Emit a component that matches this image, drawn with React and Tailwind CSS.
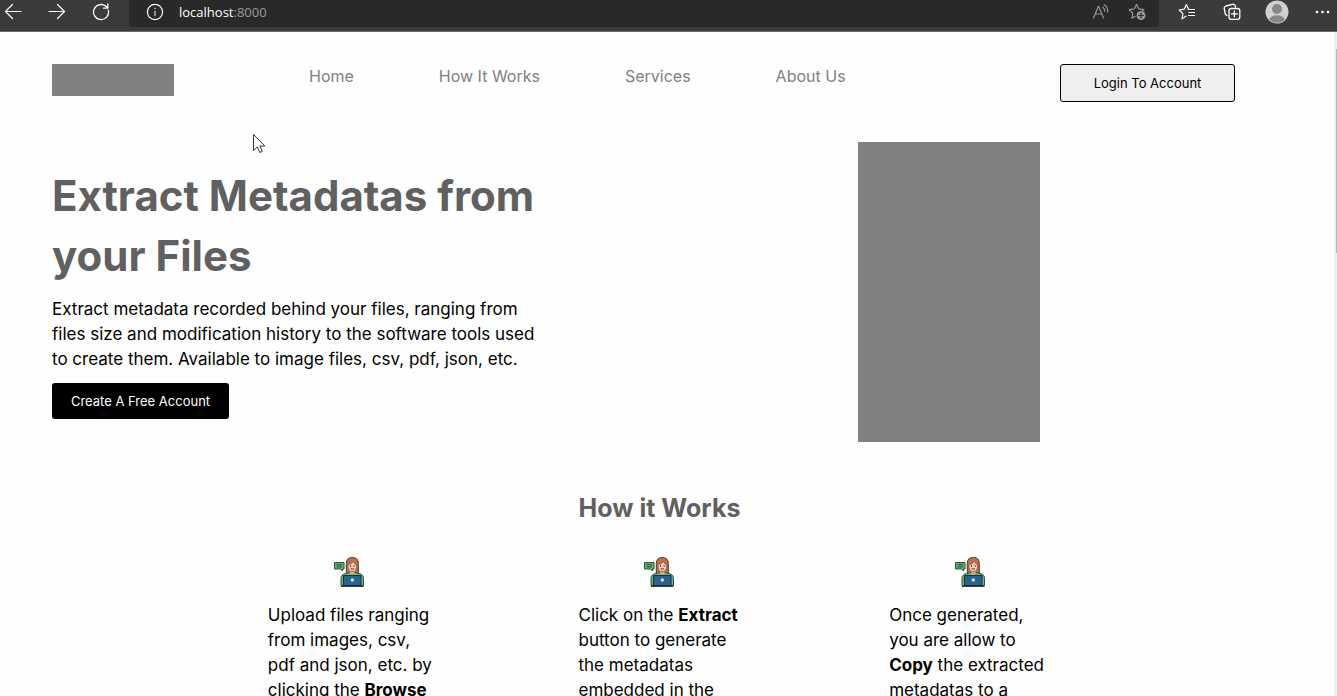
import React from "react";

const stroke = { fill: "none", stroke: "currentColor", strokeLinecap: "round", strokeLinejoin: "round" };

function ToolButton({ label, className = "", children }) {
  return (
    <button type="button" aria-label={label} className={`flex h-6 w-6 shrink-0 items-center justify-center ${className}`}>
      {children}
    </button>
  );
}

function ArrowLeft() {
  return (
    <svg width="18" height="18" viewBox="0 0 18 18" {...stroke} strokeWidth="1.2">
      <path d="M17 8.500H1.500M8.500 1.500l-7 7 7 7" />
    </svg>
  );
}

function ArrowRight() {
  return (
    <svg width="18" height="18" viewBox="0 0 18 18" {...stroke} strokeWidth="1.2">
      <path d="M1 8.500h15.500M9.500 1.500l7 7-7 7" />
    </svg>
  );
}

function Reload() {
  return (
    <svg width="18" height="18" viewBox="0 0 18 18" {...stroke} strokeWidth="1.3">
      <path d="M16.300 7.200A7.500 7.500 0 1 1 13.600 3.100L15.800 5M15.800 1v4.200h-4.200" />
    </svg>
  );
}

function Info() {
  return (
    <svg width="18" height="18" viewBox="0 0 18 18" {...stroke} strokeWidth="1.2">
      <circle cx="9" cy="9" r="7.600" />
      <path d="M9 8.200v4.300" stroke="#aaa" strokeWidth="1.600" />
      <circle cx="9" cy="5.400" r=".6" fill="#aaa" stroke="#aaa" strokeWidth=".6" />
    </svg>
  );
}

function ReadAloud() {
  return (
    <svg width="18" height="18" viewBox="0 0 18 18" {...stroke} strokeWidth="1.200">
      <path d="M1.500 15L6.500 3l5 12M3.300 11h6.400M10.800 4.200q2 1.600 1.800 4M12.300 1.800q3.800 2.700 3.200 7" />
    </svg>
  );
}

function StarPlus() {
  return (
    <svg width="18" height="18" viewBox="0 0 18 18" {...stroke} strokeWidth="1.200">
      <path d="M7.200 13.300L4 15.200l.8-5L1.200 6.700l5-.8L8.500 1.300l2.300 4.600 5 .8-1.300 1.300" />
      <circle cx="13" cy="12.500" r="4.500" fill="currentColor" stroke="none" />
      <path d="M13 10.200v4.600M10.700 12.500h4.600" stroke="#292929" />
    </svg>
  );
}

function Favorites() {
  return (
    <svg width="18" height="18" viewBox="0 0 18 18" {...stroke} strokeWidth="1.200">
      <path d="M8 13.200L4 15.800l.9-5.100L1.200 7l5-.8L8.400 1.600l2.200 4.900H16.500M11 9.500h5.500M10.500 12.500h6" />
    </svg>
  );
}

function Collections() {
  return (
    <svg width="18" height="18" viewBox="0 0 18 18" {...stroke} strokeWidth="1.300">
      <path d="M4 12.500Q2.500 12 2.200 10.500L1.200 5.500Q1 3.600 2.800 3l6.700-1.700q1.900-.3 2.600 1.300l.4 1.400" />
      <rect x="6" y="5.500" width="10.800" height="10.800" rx="2.200" />
      <path d="M11.400 8v5.800M8.500 10.900h5.800" />
    </svg>
  );
}

function Avatar() {
  return (
    <svg width="24" height="24" viewBox="0 0 24 24">
      <defs>
        <clipPath id="avatar-edge"><circle cx="12" cy="12" r="10.800" /></clipPath>
      </defs>
      <circle cx="12" cy="12" r="11.500" fill="#d2d0ce" />
      <circle cx="12" cy="9" r="5" fill="#8a8886" />
      <ellipse cx="12" cy="20" rx="7.800" ry="4.700" fill="#8a8886" clipPath="url(#avatar-edge)" />
    </svg>
  );
}

function Worker() {
  return (
    <svg width="32" height="32" viewBox="0 0 32 32" className="block">
      <path d="M1.500 6.500h9.500v6.500H9.500v2l-2-2h-6z" fill="#62b276" stroke="#2d5038" strokeLinejoin="round" />
      <path d="M3.500 8.700h5.500M3.500 10.800h5.500" stroke="#254c34" />
      <path d="M13.300 18V7.500q0-6 6-6t6 6V18z" fill="#b9704d" stroke="#54362a" />
      <path d="M8 29.500v-7q0-4 4.500-5l4-1h5.500l4 1q4.500 1 4.500 5v7z" fill="#69b77a" stroke="#2c4e39" />
      <path d="M16.800 13h5v4l-2.500 2.200-2.500-2.200z" fill="#dca184" />
      <path d="M15 8.500q3.700-.3 5.500-3 .8 2.500 3 3v2.700q-.4 4.300-4.200 4.300T15 11.200z" fill="#f6cdb2" stroke="#7e5140" strokeWidth=".7" />
      <path d="M17.500 9.500v.8M21.200 9.500v.8M18 12.800q1.300 1 2.600 0" stroke="#403035" fill="none" strokeLinecap="round" />
      <path d="M10.500 19.500h17.500v10H10.500z" fill="#2b628c" stroke="#173247" strokeLinejoin="round" />
      <path d="M8 30.300h22.500" stroke="#202a34" strokeWidth="1.200" />
      <circle cx="19.300" cy="24" r="1.700" fill="#c9e1ed" />
    </svg>
  );
}

function BrowserBar() {
  return (
    <header className="flex h-8 shrink-0 items-start justify-between border-b border-[#6b6b6b] bg-[#3b3b3b] text-white">
      <div className="flex shrink-0 gap-5 pl-px pr-4">
        <ToolButton label="Back"><ArrowLeft /></ToolButton>
        <ToolButton label="Forward"><ArrowRight /></ToolButton>
        <ToolButton label="Reload"><Reload /></ToolButton>
      </div>
      <div className="flex h-[27px] flex-1 items-start gap-3 rounded-b bg-[#292929] pl-[14px] pr-[10px]">
        <ToolButton label="Site information"><Info /></ToolButton>
        <div className="flex-1 font-['Open_Sans',sans-serif] text-[13px] leading-6">
          localhost<span className="text-[#999]">:8000</span>
        </div>
        <ToolButton label="Read aloud" className="text-[#969696]"><ReadAloud /></ToolButton>
        <ToolButton label="Add to favorites" className="text-[#969696]"><StarPlus /></ToolButton>
      </div>
      <div className="flex shrink-0 gap-[21px] pl-4 pr-[3px]">
        <ToolButton label="Favorites"><Favorites /></ToolButton>
        <ToolButton label="Collections"><Collections /></ToolButton>
        <ToolButton label="Profile"><Avatar /></ToolButton>
        <ToolButton label="Settings and more">
          <svg width="18" height="18" viewBox="0 0 18 18" fill="currentColor">
            <circle cx="4" cy="9" r="1.300" /><circle cx="9.500" cy="9" r="1.300" /><circle cx="15" cy="9" r="1.300" />
          </svg>
        </ToolButton>
      </div>
    </header>
  );
}

function Step({ children }) {
  return (
    <li className="flex flex-col items-center">
      <div className="w-[162px] whitespace-nowrap">
        <div className="mb-[15px] flex justify-center"><Worker /></div>
        <p>{children}</p>
      </div>
    </li>
  );
}

export default function App() {
  return (
    <div className="flex h-screen flex-col overflow-hidden bg-[#fefefe] font-['Inter',sans-serif] text-[17px] leading-[25px] text-black">
      <BrowserBar />
      <div className="flex min-h-0 flex-1">
        <main className="relative min-w-0 flex-1 overflow-hidden pl-[52px] pr-[67px]">
          <div className="flex items-start pt-8">
            <div className="h-8 w-[122px] shrink-0 bg-[#808080]" />
            <nav className="ml-[135px] flex gap-[85px] whitespace-nowrap text-base leading-[25px] text-[#808080]">
              <a href="#home">Home</a>
              <a href="#how">How It Works</a>
              <a href="#services">Services</a>
              <a href="#about">About Us</a>
            </nav>
            <button type="button" className="ml-auto mr-8 h-[38px] w-[175px] rounded-[3px] border border-black bg-[#efefef] text-[13px]">
              Login To Account
            </button>
          </div>
          <svg width="14" height="22" viewBox="0 0 14 22" className="absolute left-[252px] top-[101px]">
            <path d="M1.500 1.500v16l3.800-3.500 2.500 5.500 2.500-1.100-2.400-5.400h5z" fill="#fff" stroke="#333" />
          </svg>
          <section id="home" className="flex justify-between pt-10">
            <div className="pt-6">
              <h1 className="text-[42px] font-bold leading-[60px] text-[#606060]">Extract Metadatas from<br />your Files</h1>
              <p className="mt-[11px]">
                Extract metadata recorded behind your files, ranging from<br />
                files size and modification history to the software tools used<br />
                to create them. Available to image files, csv, pdf, json, etc.
              </p>
              <button type="button" className="mt-[11px] h-9 w-[177px] rounded-[3px] bg-black text-[13px] text-white">
                Create A Free Account
              </button>
            </div>
            <div className="mr-[227px] h-[300px] w-[182px] shrink-0 bg-[#808080]" />
          </section>
          <section id="how" className="pt-[46px]">
            <h2 className="text-center text-[25px] font-bold leading-10 text-[#606060]">How it Works</h2>
            <ol className="mx-auto mt-7 grid w-full max-w-[932px] grid-cols-3">
              <Step>Upload files ranging<br />from images, csv,<br />pdf and json, etc. by<br />clicking the <b>Browse</b></Step>
              <Step>Click on the <b>Extract</b><br />button to generate<br />the metadatas<br />embedded in the</Step>
              <Step>Once generated,<br />you are allow to<br /><b>Copy</b> the extracted<br />metadatas to a</Step>
            </ol>
          </section>
        </main>
        <div className="flex w-[3px] shrink-0 justify-end bg-[#f0f0f0] pt-[17px]">
          <div className="h-[204px] w-px bg-[#b8b8b8]" />
        </div>
      </div>
    </div>
  );
}
